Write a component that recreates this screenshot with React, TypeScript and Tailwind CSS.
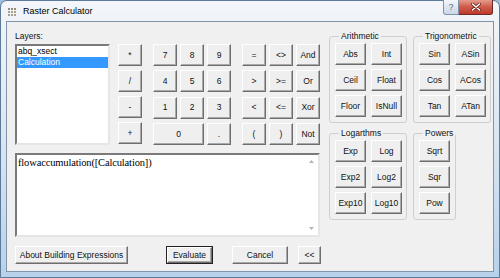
import React from "react";

type BP = { children?: React.ReactNode; className?: string };

const Btn = ({ children, className = "" }: BP) => (
  <div
    className={`flex items-center justify-center bg-[#efefef] border border-t-white border-l-white border-r-[#6e6e6e] border-b-[#6e6e6e] shadow-[inset_-1px_-1px_0_#a9a9a9] text-[8.5px] leading-none text-[#111] ${className}`}
  >
    {children}
  </div>
);

const K = ({ children, className = "" }: BP) => (
  <Btn className={`h-[22px] w-[24px] ${className}`}>{children}</Btn>
);

const F = ({ children }: BP) => <Btn className="h-[22px] w-[31px]">{children}</Btn>;

const Group = ({ title, className = "", children }: { title: string; className?: string; children: React.ReactNode }) => (
  <fieldset className={`border border-[#cfcfcf] rounded-[3px] pl-[5px] pt-[2px] pb-[5px] ${className}`}>
    <legend className="ml-[4px] px-[2px] text-[8.5px] leading-[10px] text-[#111]">{title}</legend>
    {children}
  </fieldset>
);

export default function App() {
  return (
    <div className="w-[500px] h-[278px] bg-[#9fbcd8] font-['Liberation_Sans',Arial,sans-serif]">
      <div className="w-[500px] h-[278px] flex flex-col rounded-t-[7px] border border-[#5d7a98] bg-gradient-to-b from-[#f3f6fa] via-[#dbe6f1] to-[#b7d2ea]">
        {/* title bar */}
        <div className="relative h-[20px] flex items-center shrink-0">
          <svg width="10" height="10" viewBox="0 0 10 10" className="ml-[6px] mt-[1px]">
            {[0, 1, 2].map((r) =>
              [0, 1, 2].map((c) => (
                <rect key={`${r}-${c}`} x={1 + c * 3} y={1 + r * 3} width="2" height="2" fill={r === 0 ? "#8f8a78" : "#a8a08a"} />
              ))
            )}
          </svg>
          <span className="ml-[6px] text-[9px] text-black leading-none">Raster Calculator</span>
          <div className="absolute top-[-1px] right-[6px] flex">
            <div className="w-[16px] h-[15px] rounded-bl-[3px] border border-[#7f93aa] border-t-0 bg-gradient-to-b from-[#f4f7fb] to-[#c9d7e6] flex items-center justify-center text-[9px] text-[#5a6d82] leading-none">
              ?
            </div>
            <div className="w-[34px] h-[15px] rounded-br-[3px] border border-[#6b2a22] border-t-0 border-l-0 bg-gradient-to-b from-[#e59a8c] via-[#cf5a48] to-[#c0392b] flex items-center justify-center">
              <svg width="10" height="8" viewBox="0 0 10 8">
                <path d="M1.5 1 L8.5 7 M8.5 1 L1.5 7" stroke="#6a2018" strokeWidth="3" strokeLinecap="round" />
                <path d="M1.5 1 L8.5 7 M8.5 1 L1.5 7" stroke="#ffffff" strokeWidth="1.6" strokeLinecap="round" />
              </svg>
            </div>
          </div>
        </div>

        {/* client area */}
        <div className="flex-1 mx-[5px] mb-[5px] border border-[#8196ad] bg-[#f0f0f0] pt-[9px] pl-[8px] flex flex-col">
          <div className="flex">
            {/* left column */}
            <div className="w-[306px] flex flex-col">
              <div className="flex">
                <div className="w-[95px] flex flex-col">
                  <div className="h-[13px] text-[8.5px] leading-[10px] text-[#111]">Layers:</div>
                  <div className="h-[101px] border-2 border-t-[#7a7a7a] border-l-[#7a7a7a] border-r-[#e6e6e6] border-b-[#e6e6e6] bg-white flex flex-col">
                    <div className="h-[11px] pl-[1px] text-[8.5px] leading-[11px] text-black">abq_xsect</div>
                    <div className="h-[11px] pl-[1px] text-[8.5px] leading-[11px] text-white bg-[#3399ff]">Calculation</div>
                  </div>
                </div>
                <div className="ml-[8px] mt-[13px] flex">
                  <div className="flex flex-col gap-[4px]">
                    <K>*</K>
                    <K>/</K>
                    <K>-</K>
                    <K>+</K>
                  </div>
                  <div className="ml-[11px] grid grid-cols-[24px_24px_24px] gap-x-[3px] gap-y-[4px]">
                    <K>7</K>
                    <K>8</K>
                    <K>9</K>
                    <K>4</K>
                    <K>5</K>
                    <K>6</K>
                    <K>1</K>
                    <K>2</K>
                    <K>3</K>
                    <K className="col-span-2 w-auto">0</K>
                    <K>.</K>
                  </div>
                  <div className="ml-[11px] grid grid-cols-[24px_24px_24px] gap-x-[3px] gap-y-[4px]">
                    <K>=</K>
                    <K>&lt;&gt;</K>
                    <K>And</K>
                    <K>&gt;</K>
                    <K>&gt;=</K>
                    <K>Or</K>
                    <K>&lt;</K>
                    <K>&lt;=</K>
                    <K>Xor</K>
                    <K>(</K>
                    <K>)</K>
                    <K>Not</K>
                  </div>
                </div>
              </div>
              {/* expression box */}
              <div className="mt-[8px] w-[305px] h-[84px] border-2 border-t-[#7a7a7a] border-l-[#7a7a7a] border-r-[#e6e6e6] border-b-[#e6e6e6] bg-white flex">
                <div className="flex-1 pl-[1px] pt-[2px] font-['Liberation_Serif','Times_New_Roman',serif] text-[10.5px] leading-[12px] tracking-[-0.15px] text-black">
                  flowaccumulation([Calculation])
                </div>
                <div className="w-[13px] flex flex-col items-center justify-between py-[5px]">
                  <svg width="5" height="3" viewBox="0 0 5 3">
                    <path d="M0 3 L2.5 0 L5 3 Z" fill="#b4b4b4" />
                  </svg>
                  <svg width="5" height="3" viewBox="0 0 5 3">
                    <path d="M0 0 L5 0 L2.5 3 Z" fill="#b4b4b4" />
                  </svg>
                </div>
              </div>
            </div>

            {/* right column */}
            <div className="ml-[8px] flex flex-col">
              <div className="flex gap-[6px]">
                <Group title="Arithmetic" className="w-[78px]">
                  <div className="grid grid-cols-[31px_31px] gap-x-[5px] gap-y-[4px]">
                    <F>Abs</F>
                    <F>Int</F>
                    <F>Ceil</F>
                    <F>Float</F>
                    <F>Floor</F>
                    <F>IsNull</F>
                  </div>
                </Group>
                <Group title="Trigonometric" className="w-[78px]">
                  <div className="grid grid-cols-[31px_31px] gap-x-[5px] gap-y-[4px]">
                    <F>Sin</F>
                    <F>ASin</F>
                    <F>Cos</F>
                    <F>ACos</F>
                    <F>Tan</F>
                    <F>ATan</F>
                  </div>
                </Group>
              </div>
              <div className="mt-[5px] flex gap-[6px]">
                <Group title="Logarthms" className="w-[78px]">
                  <div className="grid grid-cols-[31px_31px] gap-x-[5px] gap-y-[4px]">
                    <F>Exp</F>
                    <F>Log</F>
                    <F>Exp2</F>
                    <F>Log2</F>
                    <F>Exp10</F>
                    <F>Log10</F>
                  </div>
                </Group>
                <Group title="Powers" className="w-[42px]">
                  <div className="flex flex-col gap-[4px]">
                    <F>Sqrt</F>
                    <F>Sqr</F>
                    <F>Pow</F>
                  </div>
                </Group>
              </div>
            </div>
          </div>

          {/* bottom buttons */}
          <div className="mt-[9px] flex">
            <Btn className="h-[18px] w-[113px]">About Building Expressions</Btn>
            <div className="ml-[38px] border border-[#222]">
              <Btn className="h-[16px] w-[45px]">Evaluate</Btn>
            </div>
            <Btn className="ml-[19px] h-[18px] w-[56px]">Cancel</Btn>
            <Btn className="ml-[10px] h-[18px] w-[23px]">&lt;&lt;</Btn>
          </div>
        </div>
      </div>
    </div>
  );
}
